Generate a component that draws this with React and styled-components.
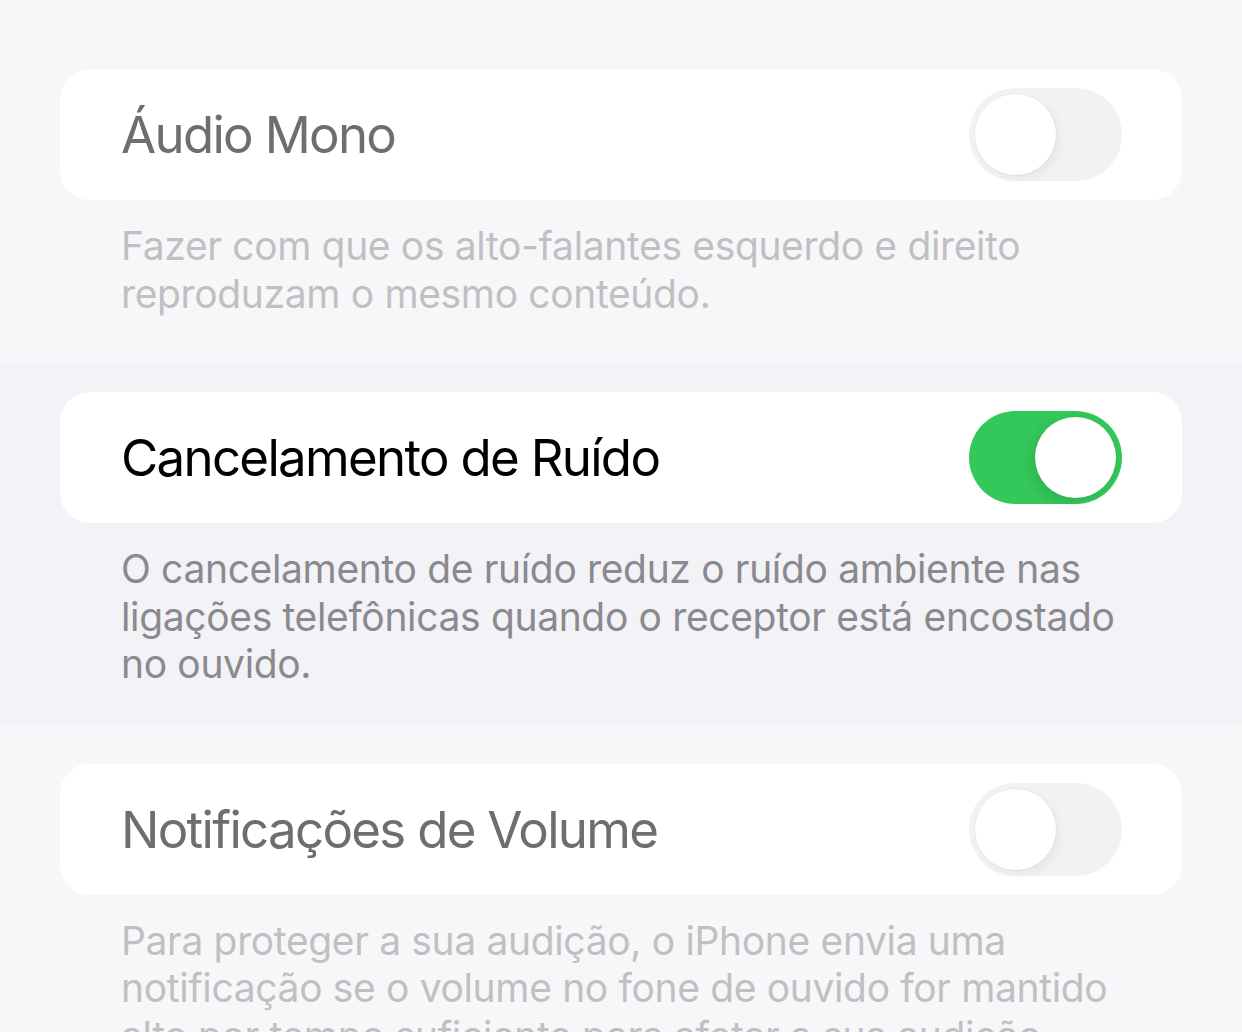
import React, { useState } from 'react'
import styled, { createGlobalStyle } from 'styled-components'

const GlobalStyle = createGlobalStyle`
  html, body {
    margin: 0;
    padding: 0;
    background: #f7f7f9;
  }
  body {
    font-family: Inter, "Noto Sans", "Liberation Sans", sans-serif;
    -webkit-font-smoothing: antialiased;
  }
`

const Page = styled.main`
  width: 1242px;
  height: 1032px;
  overflow: hidden;
  display: flex;
  flex-direction: column;
`

const Section = styled.section`
  background: ${p => (p.$dimmed ? '#f7f7f9' : '#f2f2f7')};
  padding: ${p => p.$top}px 60px ${p => p.$bottom}px;
`

const Card = styled.div`
  display: flex;
  align-items: center;
  justify-content: space-between;
  height: 131px;
  padding: 0 60px 0 61px;
  box-sizing: border-box;
  background: #fff;
  border-radius: 30px;
`

const Title = styled.span`
  font-size: 51px;
  letter-spacing: -1.7px;
  color: ${p => (p.$dimmed ? '#6e6e6e' : '#000')};
`

const Footer = styled.p`
  margin: 22px 0 0;
  padding: 0 0 0 61px;
  font-size: 39px;
  line-height: 47.5px;
  letter-spacing: -0.35px;
  white-space: nowrap;
  color: ${p => (p.$dimmed ? '#c0c0c3' : '#8a8a8e')};
`

const Track = styled.button`
  flex: 0 0 auto;
  display: flex;
  justify-content: ${p => (p.$on ? 'flex-end' : 'flex-start')};
  align-items: center;
  width: 153px;
  height: 93px;
  padding: 0 6px;
  box-sizing: border-box;
  border: none;
  border-radius: 47px;
  cursor: pointer;
  background: ${p => (p.$on ? '#34c759' : p.$dimmed ? '#f2f2f2' : '#e9e9eb')};
`

const Knob = styled.span`
  width: 81px;
  height: 81px;
  border-radius: 50%;
  background: #fff;
  box-shadow: ${p =>
    p.$dimmed
      ? '0 0 0 1px rgba(0,0,0,0.03), 4px 4px 10px rgba(0,0,0,0.05)'
      : '0 0 0 1px rgba(0,0,0,0.02), -4px 4px 12px rgba(0,0,0,0.1)'};
`

const Toggle = ({ on, dimmed, onChange }) => (
  <Track $on={on} $dimmed={dimmed} onClick={onChange} aria-pressed={on}>
    <Knob $dimmed={dimmed} />
  </Track>
)

const Setting = ({ title, lines, on, dimmed, top, bottom, onToggle }) => (
  <Section $dimmed={dimmed} $top={top} $bottom={bottom}>
    <Card>
      <Title $dimmed={dimmed}>{title}</Title>
      <Toggle on={on} dimmed={dimmed} onChange={onToggle} />
    </Card>
    <Footer $dimmed={dimmed}>
      {lines.map((line, i) => (
        <React.Fragment key={i}>
          {line}
          {i < lines.length - 1 && <br />}
        </React.Fragment>
      ))}
    </Footer>
  </Section>
)

export default function App() {
  const [state, setState] = useState({ mono: false, noise: true, volume: false })
  const flip = key => () => setState(s => ({ ...s, [key]: !s[key] }))

  return (
    <Page>
      <GlobalStyle />
      <Setting
        dimmed
        top={69}
        bottom={45}
        title="Áudio Mono"
        on={state.mono}
        onToggle={flip('mono')}
        lines={[
          'Fazer com que os alto-falantes esquerdo e direito',
          'reproduzam o mesmo conteúdo.',
        ]}
      />
      <Setting
        top={30}
        bottom={37}
        title="Cancelamento de Ruído"
        on={state.noise}
        onToggle={flip('noise')}
        lines={[
          'O cancelamento de ruído reduz o ruído ambiente nas',
          'ligações telefônicas quando o receptor está encostado',
          'no ouvido.',
        ]}
      />
      <Setting
        dimmed
        top={39}
        bottom={40}
        title="Notificações de Volume"
        on={state.volume}
        onToggle={flip('volume')}
        lines={[
          'Para proteger a sua audição, o iPhone envia uma',
          'notificação se o volume no fone de ouvido for mantido',
          'alto por tempo suficiente para afetar a sua audição.',
        ]}
      />
    </Page>
  )
}
